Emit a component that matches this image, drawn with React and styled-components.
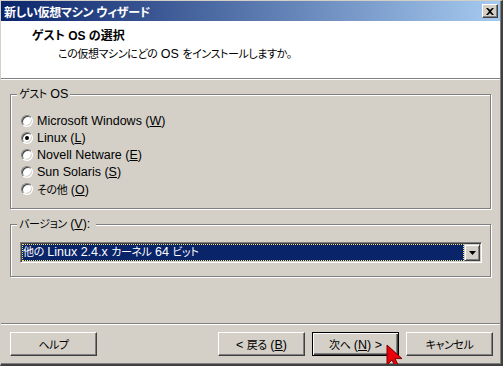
import styled, { createGlobalStyle } from "styled-components";

const GlobalStyle = createGlobalStyle`
  html, body {
    margin: 0;
    padding: 0;
    background: #d4d0c8;
  }
  body {
    font-family: "Liberation Sans", "Noto Sans CJK JP", sans-serif;
    font-size: 12.5px;
    font-feature-settings: "palt";
    color: #000;
  }
`;

// 日本語部分だけ少し小さく詰める
const J = styled.span`
  font-size: 11px;
  letter-spacing: -0.4px;
`;

const OS_LIST = [
  { label: "Microsoft Windows", key: "W" },
  { label: "Linux", key: "L", checked: true },
  { label: "Novell Netware", key: "E" },
  { label: "Sun Solaris", key: "S" },
  { label: "その他", key: "O", jp: true },
];

function App() {
  return (
    <>
      <GlobalStyle />
      <Window>
        <TitleBar>
          <TitleText>新しい仮想マシン ウィザード</TitleText>
          <CloseButton aria-label="閉じる">
            <svg width="8" height="7" viewBox="0 0 8 7">
              <path d="M0 0h2l2 2 2-2h2L5 3.5 8 7H6L4 5 2 7H0l3-3.5z" fill="#000" />
            </svg>
          </CloseButton>
        </TitleBar>

        <Header>
          <HeaderTitle>ゲスト OS の選択</HeaderTitle>
          <HeaderSub>
            <J>この仮想マシンにどの</J> OS <J>をインストールしますか。</J>
          </HeaderSub>
        </Header>
        <Rule />

        <Body>
          {/* ゲスト OS グループ */}
          <Group $pad="17px 10px 11px 10px">
            <Caption>
              <J>ゲスト</J> OS
            </Caption>
            <RadioList>
              {OS_LIST.map((os) => (
                <RadioRow key={os.key}>
                  <RadioDot $checked={os.checked} />
                  <span>
                    {os.jp ? <J>{os.label}</J> : os.label} (<u>{os.key}</u>)
                  </span>
                </RadioRow>
              ))}
            </RadioList>
          </Group>

          {/* バージョン グループ */}
          <Group $pad="17px 8px 13px 9px">
            <Caption $after>
              <J>バージョン</J> (<u>V</u>):
            </Caption>
            <Combo>
              <ComboValue>
                <J>他の</J> Linux 2.4.x <J>カーネル</J> 64 <J>ビット</J>
              </ComboValue>
              <ComboArrow>
                <svg width="7" height="4" viewBox="0 0 7 4">
                  <path d="M0 0h7L3.5 4z" fill="#000" />
                </svg>
              </ComboArrow>
            </Combo>
          </Group>
        </Body>

        <Footer>
          <Rule />
          <ButtonRow>
            <Button>
              <J>ヘルプ</J>
            </Button>
            <Spacer />
            <Button>
              &lt; <J>戻る</J> (<u>B</u>)
            </Button>
            <Button $default>
              <J>次へ</J> (<u>N</u>) &gt;
            </Button>
            <Button>
              <J>キャンセル</J>
            </Button>
          </ButtonRow>
        </Footer>

        <Cursor width="17" height="24" viewBox="0 0 17 24">
          <path
            d="M1 1v20l5-5 4 8 3-1.4-4-8h7z"
            fill="#e8000b"
            stroke="#7a0000"
            strokeWidth="1"
            strokeLinejoin="round"
          />
        </Cursor>
      </Window>
    </>
  );
}

export default App;

const Window = styled.div`
  position: relative;
  width: 503px;
  height: 366px;
  box-sizing: border-box;
  display: flex;
  flex-direction: column;
  background: #d4d0c8;
  border-left: 1px solid #d4d0c8;
  border-top: 1px solid #d4d0c8;
  border-right: 2px solid #404040;
  border-bottom: 2px solid #404040;
  padding-right: 1px;
  box-shadow: inset -1px -1px #808080;
  overflow: hidden;
`;

const TitleBar = styled.div`
  height: 20px;
  flex-shrink: 0;
  display: flex;
  align-items: center;
  justify-content: space-between;
  padding: 0 2px 0 3px;
  background: linear-gradient(to right, #0a246a, #a6caf0);
`;

const TitleText = styled.span`
  color: #fff;
  font-weight: bold;
  font-size: 12px;
  letter-spacing: -0.3px;
  white-space: nowrap;
`;

const CloseButton = styled.div`
  width: 16px;
  height: 14px;
  box-sizing: border-box;
  display: flex;
  align-items: center;
  justify-content: center;
  background: #d4d0c8;
  border: 1px solid;
  border-color: #fff #404040 #404040 #fff;
  box-shadow: inset -1px -1px #808080;
`;

const Header = styled.div`
  height: 57px;
  flex-shrink: 0;
  box-sizing: border-box;
  background: #fff;
  padding: 8px 0 0 31px;
`;

const HeaderTitle = styled.div`
  font-weight: bold;
  font-size: 12px;
  line-height: 14px;
`;

const HeaderSub = styled.div`
  margin-top: 4px;
  padding-left: 26px;
  line-height: 14px;
  white-space: nowrap;
`;

const Rule = styled.div`
  flex-shrink: 0;
  border-top: 1px solid #808080;
  border-bottom: 1px solid #fff;
`;

const Body = styled.div`
  flex: 1;
  display: flex;
  flex-direction: column;
  gap: 15px;
  padding: 14px 9px 0 9px;
`;

const Group = styled.div`
  position: relative;
  border: 1px solid #808080;
  box-shadow: inset 1px 1px #fff, 1px 1px #fff;
  padding: ${({ $pad }) => $pad};
`;

const Caption = styled.span`
  position: absolute;
  top: -8px;
  left: 6px;
  padding: ${({ $after }) => ($after ? "0 6px 0 2px" : "0 2px")};
  line-height: 14px;
  background: #d4d0c8;
  white-space: nowrap;
`;

const RadioList = styled.div`
  display: flex;
  flex-direction: column;
`;

const RadioRow = styled.label`
  height: 17px;
  display: flex;
  align-items: center;
  gap: 4px;
  white-space: nowrap;
`;

const RadioDot = styled.span`
  width: 12px;
  height: 12px;
  box-sizing: border-box;
  border-radius: 50%;
  border: 1px solid;
  border-color: #808080 #fff #fff #808080;
  box-shadow: inset 1px 1px #404040, inset -1px -1px #d4d0c8;
  background: #fff;
  display: flex;
  align-items: center;
  justify-content: center;

  &::after {
    content: "";
    width: 4px;
    height: 4px;
    border-radius: 50%;
    background: #000;
    display: ${({ $checked }) => ($checked ? "block" : "none")};
  }
`;

const Combo = styled.div`
  height: 21px;
  box-sizing: border-box;
  display: flex;
  background: #fff;
  border: 1px solid;
  border-color: #808080 #fff #fff #808080;
  box-shadow: inset 1px 1px #404040, inset -1px -1px #d4d0c8;
  padding: 1px;
`;

const ComboValue = styled.div`
  flex: 1;
  box-sizing: border-box;
  background: #0a246a;
  color: #fff;
  border: 1px dotted #f4e27a;
  line-height: 15px;
  white-space: nowrap;
  overflow: hidden;
`;

const ComboArrow = styled.div`
  width: 16px;
  box-sizing: border-box;
  display: flex;
  align-items: center;
  justify-content: center;
  background: #d4d0c8;
  border: 1px solid;
  border-color: #d4d0c8 #404040 #404040 #d4d0c8;
  box-shadow: inset 1px 1px #fff, inset -1px -1px #808080;
`;

const Footer = styled.div`
  flex-shrink: 0;
  display: flex;
  flex-direction: column;
`;

const ButtonRow = styled.div`
  display: flex;
  gap: 7px;
  padding: 7px 7px 8px 9px;
`;

const Spacer = styled.div`
  flex: 1;
`;

const Button = styled.button`
  width: 87px;
  height: 24px;
  box-sizing: border-box;
  padding: 0;
  font: inherit;
  font-feature-settings: "palt";
  color: #000;
  background: #d4d0c8;
  border: 1px solid;
  border-color: ${({ $default }) =>
    $default ? "#000" : "#fff #404040 #404040 #fff"};
  box-shadow: ${({ $default }) =>
    $default
      ? "inset 1px 1px #fff, inset -1px -1px #404040, inset -2px -2px #808080"
      : "inset -1px -1px #808080"};
  white-space: nowrap;
`;

const Cursor = styled.svg`
  position: absolute;
  left: 385px;
  top: 343px;
`;
